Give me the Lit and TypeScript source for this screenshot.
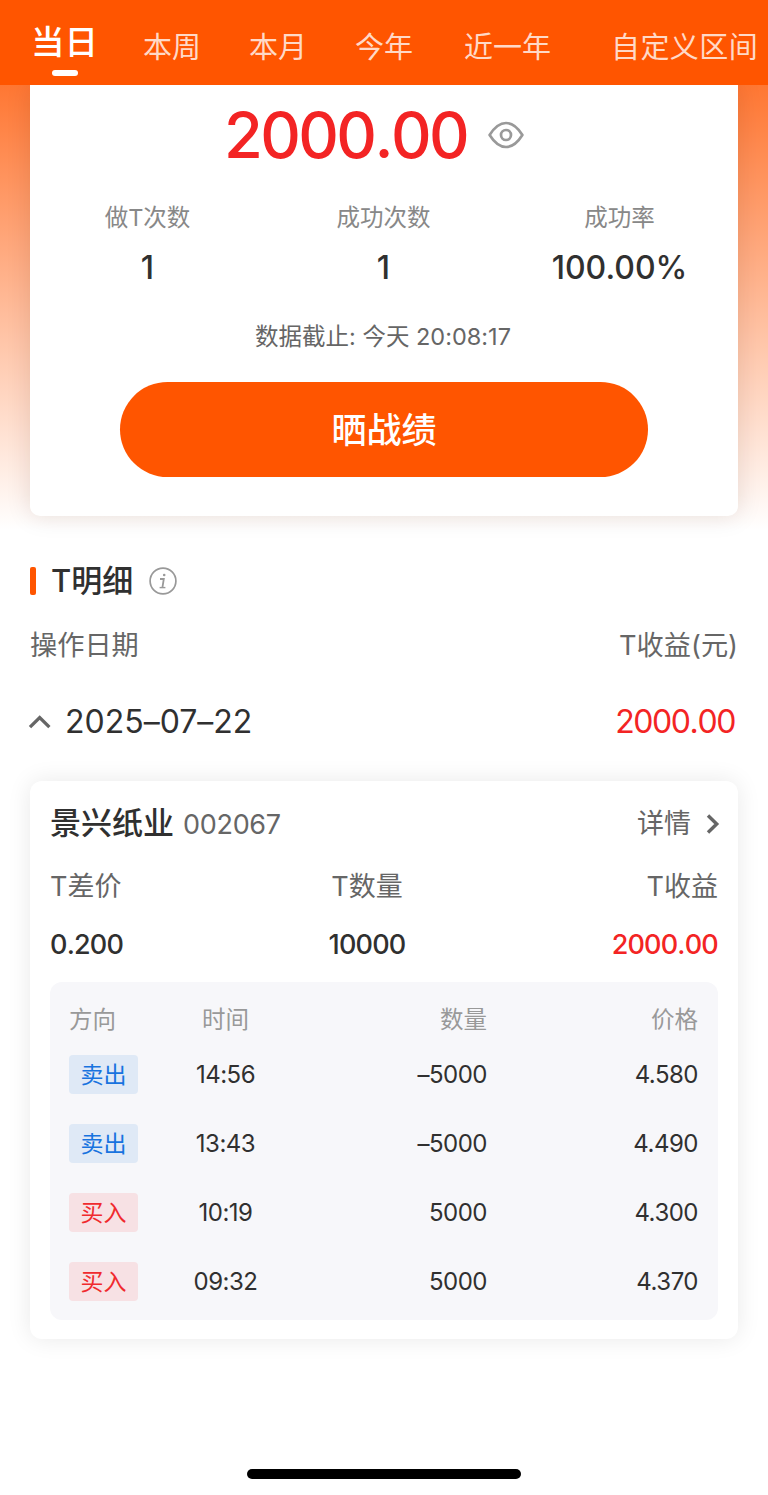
import { LitElement, html, css } from "lit";
import { customElement } from "lit/decorators.js";
import { classMap } from "lit/directives/class-map.js";

interface Trade {
  side: "sell" | "buy";
  time: string;
  qty: string;
  price: string;
}

@customElement("app-root")
export class AppRoot extends LitElement {
  static styles = css`
    :host {
      display: flex;
      flex-direction: column;
      width: 768px;
      height: 1495px;
      overflow: hidden;
      box-sizing: border-box;
      background: linear-gradient(#ff7733 85px, #ffffff 530px) #fff;
      font-family: Inter, "Noto Sans CJK SC", sans-serif;
      font-feature-settings: "calt" 0;
      color: #303030;
      white-space: nowrap;
    }
    * { box-sizing: border-box; }
    .tabs {
      position: relative;
      z-index: 1;
      flex: none;
      height: 85px;
      background: #ff5500;
      display: flex;
      align-items: flex-start;
      padding: 28px 0 0 140px;
      font-size: 29px;
      line-height: 40px;
      color: #ffd9c7;
    }
    .tab { flex: none; margin-right: 48px; }
    .tab.active {
      margin: -6px 45px 0 -109px;
      font-size: 33.5px;
      font-weight: 500;
      color: #fff;
      display: flex;
      flex-direction: column;
      align-items: center;
    }
    .tab.active::after {
      content: "";
      width: 26px;
      height: 6px;
      border-radius: 3px;
      background: #fff;
      margin-top: 8px;
    }
    .tab.year { margin-right: 51px; }
    .tab.span { margin-right: 60px; }
    .tab.custom { letter-spacing: 0.4px; }
    .summary {
      flex: none;
      height: 431px;
      margin: 0 30px;
      background: #fff;
      border-radius: 0 0 10px 10px;
      box-shadow: 0 0 24px rgba(60, 20, 0, 0.13);
      display: flex;
      flex-direction: column;
      align-items: center;
    }
    .total {
      height: 70px;
      margin-top: 15px;
      display: flex;
      align-items: center;
      gap: 20px;
      align-self: flex-start;
      margin-left: 194px;
    }
    .amount {
      width: 243px;
      font-size: 63px;
      line-height: 70px;
      font-weight: 500;
      letter-spacing: -2.6px;
      font-kerning: none;
      color: #f32424;
    }
    .eye { display: block; width: 38px; height: 30px; }
    .stats {
      width: 708px;
      display: grid;
      grid-template-columns: repeat(3, 1fr);
      text-align: center;
      margin: 28px 0 0 -1px;
    }
    .stat-label { font-size: 23.5px; line-height: 40px; color: #888; }
    .stat-value { font-size: 32px; line-height: 40px; font-weight: 500; margin-top: 10px; }
    .cutoff {
      font-size: 23.5px;
      line-height: 40px;
      color: #666;
      margin: 29px 0 0 -2px;
    }
    .share {
      width: 528px;
      height: 95px;
      margin-top: 25px;
      border: 0;
      border-radius: 48px;
      background: #ff5500;
      color: #fff;
      font: 500 35px/95px Inter, "Noto Sans CJK SC", sans-serif;
    }
    .detail-title {
      display: flex;
      align-items: center;
      height: 40px;
      margin: 45px 30px 0;
    }
    .bar { width: 6px; height: 28px; border-radius: 2px; background: #ff5500; }
    .title { font-size: 31px; font-weight: 500; line-height: 40px; margin: 0 16px 0 15px; }
    .row {
      display: flex;
      align-items: center;
      justify-content: space-between;
      height: 40px;
      line-height: 40px;
    }
    .heads { margin: 25px 30px 0 30px; font-size: 27.2px; color: #666; }
    .day { margin: 36px 33px 0 28px; font-size: 32px; }
    .date { display: flex; align-items: center; gap: 13px; }
    .day-amount { letter-spacing: -1.4px; font-kerning: none; }
    .red { color: #f32424; }
    .card {
      flex: none;
      height: 558px;
      margin: 39px 30px 0;
      padding: 22px 20px 0;
      border-radius: 12px;
      background: #fff;
      box-shadow: 0 0 24px rgba(0, 0, 0, 0.09);
    }
    .name { font-size: 31px; font-weight: 500; }
    .code { font-size: 27px; color: #666; margin-left: 9px; font-weight: 400; letter-spacing: -0.3px; }
    .more { display: flex; align-items: center; font-size: 27px; color: #666; gap: 15px; margin-right: -2px; }
    .card > .row { padding-top: 2px; }
    .trio {
      display: grid;
      grid-template-columns: 1fr 130px 1fr;
      font-size: 27px;
      line-height: 40px;
      color: #666;
      margin-top: 24px;
    }
    .trio > :nth-child(2) { text-align: center; margin: 0 8px 0 -26px; }
    .trio > :nth-child(3) { text-align: right; }
    .trio.values { margin-top: 18px; color: #303030; font-weight: 500; letter-spacing: -0.8px; font-kerning: none; }
    .trio .red { color: #f32424; }
    .trades {
      height: 338px;
      margin-top: 17px;
      padding: 17px 20px 0 19px;
      border-radius: 12px;
      background: #f7f7fa;
    }
    .trade {
      display: grid;
      grid-template-columns: 69px 175px 174px 1fr;
      align-items: center;
      height: 39px;
      line-height: 41px;
      margin-bottom: 30px;
      font-size: 24px;
      letter-spacing: -0.5px;
    }
    .trade.head { color: #999; font-size: 23.5px; margin-bottom: 16px; letter-spacing: 0; }
    .time { text-align: center; }
    .num { text-align: right; }
    .tag {
      height: 39px;
      line-height: 41px;
      border-radius: 4px;
      text-align: center;
      font-size: 23px;
      letter-spacing: 0;
    }
    .sell { background: #dfe9f6; color: #1873df; }
    .buy { background: #f7e1e4; color: #f02a2e; }
    .home {
      flex: none;
      width: 274px;
      height: 10px;
      margin: 130px 0 0 247px;
      border-radius: 5px;
      background: #000;
    }
    svg { flex: none; display: block; }
  `;

  private trades: Trade[] = [
    { side: "sell", time: "14:56", qty: "–5000", price: "4.580" },
    { side: "sell", time: "13:43", qty: "–5000", price: "4.490" },
    { side: "buy", time: "10:19", qty: "5000", price: "4.300" },
    { side: "buy", time: "09:32", qty: "5000", price: "4.370" },
  ];

  private stats = [
    ["做T次数", "1"],
    ["成功次数", "1"],
    ["成功率", "100.00%"],
  ];

  render() {
    return html`
      <nav class="tabs">
        <span class="tab active">当日</span>
        <span class="tab">本周</span>
        <span class="tab">本月</span>
        <span class="tab year">今年</span>
        <span class="tab span">近一年</span>
        <span class="tab custom">自定义区间</span>
      </nav>
      <section class="summary">
        <div class="total">
          <span class="amount">2000.00</span>
          <svg class="eye" viewBox="0 0 38 30" fill="none" stroke="#999" stroke-width="2.7">
            <path d="M2.600 15C7 8 12.500 3 19 3s12 5 16.400 12C31 22 25.500 27 19 27S7 22 2.600 15Z" stroke-linejoin="round" />
            <circle cx="19" cy="15" r="5" />
          </svg>
        </div>
        <div class="stats">
          ${this.stats.map(
            ([label, value]) => html`<div>
              <div class="stat-label">${label}</div>
              <div class="stat-value">${value}</div>
            </div>`
          )}
        </div>
        <div class="cutoff">数据截止: 今天 20:08:17</div>
        <button class="share">晒战绩</button>
      </section>
      <div class="detail-title">
        <span class="bar"></span>
        <span class="title">T明细</span>
        <svg width="28" height="28" viewBox="0 0 28 28" fill="none" stroke="#999">
          <circle cx="14" cy="14" r="12.900" stroke-width="1.700" />
          <circle cx="15.200" cy="8" r="1.300" fill="#999" stroke="none" />
          <path d="M11 12h3.800L13.400 20.600" stroke-width="1.800" />
          <path d="M10.600 20.600h5.800" stroke-width="1.400" />
        </svg>
      </div>
      <div class="row heads"><span>操作日期</span><span>T收益(元)</span></div>
      <div class="row day">
        <span class="date">
          <svg width="24" height="16" viewBox="0 0 24 16" fill="none" stroke="#666" stroke-width="3.300">
            <path d="M2 13.200 11.700 3.600 21.400 13.200" />
          </svg>
          <span class="day-text">2025–07–22</span>
        </span>
        <span class="day-amount red">2000.00</span>
      </div>
      <section class="card">
        <div class="row">
          <span class="name">景兴纸业<span class="code">002067</span></span>
          <span class="more">详情
            <svg width="14" height="20" viewBox="0 0 14 20" fill="none" stroke="#666" stroke-width="3.400">
              <path d="M2 1.500 10.700 10 2 18.500" />
            </svg>
          </span>
        </div>
        <div class="trio"><span>T差价</span><span>T数量</span><span>T收益</span></div>
        <div class="trio values"><span>0.200</span><span>10000</span><span class="red">2000.00</span></div>
        <div class="trades">
          <div class="trade head">
            <span>方向</span><span class="time">时间</span><span class="num">数量</span><span class="num">价格</span>
          </div>
          ${this.trades.map(
            (t) => html`<div class="trade">
              <span class=${classMap({ tag: true, [t.side]: true })}>${t.side === "sell" ? "卖出" : "买入"}</span>
              <span class="time">${t.time}</span>
              <span class="num">${t.qty}</span>
              <span class="num">${t.price}</span>
            </div>`
          )}
        </div>
      </section>
      <div class="home"></div>
    `;
  }
}
